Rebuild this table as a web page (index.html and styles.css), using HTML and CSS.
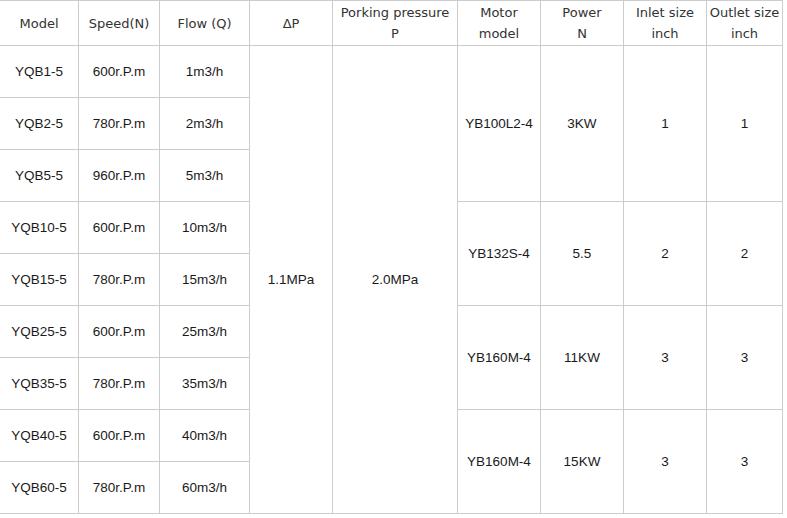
FILE: index.html
```html
<!DOCTYPE html>
<html>
<head>
<meta charset="utf-8">
<link rel="stylesheet" href="styles.css">
</head>
<body>
<table class="spec">
  <colgroup>
    <col class="c1"><col class="c2"><col class="c3"><col class="c4"><col class="c5"><col class="c6"><col class="c7"><col class="c8"><col class="c9">
  </colgroup>
  <thead>
    <tr class="head">
      <th>Model</th>
      <th>Speed(N)</th>
      <th>Flow (Q)</th>
      <th>ΔP</th>
      <th>Porking pressure<br>P</th>
      <th>Motor<br>model</th>
      <th>Power<br>N</th>
      <th>Inlet size<br>inch</th>
      <th>Outlet size<br>inch</th>
    </tr>
  </thead>
  <tbody>
    <tr>
      <td>YQB1-5</td><td>600r.P.m</td><td>1m3/h</td>
      <td rowspan="9">1.1MPa</td>
      <td rowspan="9">2.0MPa</td>
      <td rowspan="3">YB100L2-4</td>
      <td rowspan="3">3KW</td>
      <td rowspan="3">1</td>
      <td rowspan="3">1</td>
    </tr>
    <tr><td>YQB2-5</td><td>780r.P.m</td><td>2m3/h</td></tr>
    <tr><td>YQB5-5</td><td>960r.P.m</td><td>5m3/h</td></tr>
    <tr>
      <td>YQB10-5</td><td>600r.P.m</td><td>10m3/h</td>
      <td rowspan="2">YB132S-4</td>
      <td rowspan="2">5.5</td>
      <td rowspan="2">2</td>
      <td rowspan="2">2</td>
    </tr>
    <tr><td>YQB15-5</td><td>780r.P.m</td><td>15m3/h</td></tr>
    <tr>
      <td>YQB25-5</td><td>600r.P.m</td><td>25m3/h</td>
      <td rowspan="2">YB160M-4</td>
      <td rowspan="2">11KW</td>
      <td rowspan="2">3</td>
      <td rowspan="2">3</td>
    </tr>
    <tr><td>YQB35-5</td><td>780r.P.m</td><td>35m3/h</td></tr>
    <tr>
      <td>YQB40-5</td><td>600r.P.m</td><td>40m3/h</td>
      <td rowspan="2">YB160M-4</td>
      <td rowspan="2">15KW</td>
      <td rowspan="2">3</td>
      <td rowspan="2">3</td>
    </tr>
    <tr><td>YQB60-5</td><td>780r.P.m</td><td>60m3/h</td></tr>
  </tbody>
</table>
</body>
</html>
```
FILE: styles.css
```css
html, body {
  margin: 0;
  padding: 0;
  background: #fff;
}

.spec {
  border-collapse: collapse;
  table-layout: fixed;
  width: 783px;
  margin-left: -1px;
}

.c1 { width: 79px; }
.c2 { width: 81px; }
.c3 { width: 90px; }
.c4 { width: 83px; }
.c5 { width: 125px; }
.c6 { width: 83px; }
.c7 { width: 83px; }
.c8 { width: 83px; }
.c9 { width: 76px; }

.spec th,
.spec td {
  border: 1px solid #cccccc;
  padding: 0;
  text-align: center;
  vertical-align: middle;
}

.spec th {
  font-family: "DejaVu Sans", sans-serif;
  font-size: 13px;
  font-weight: normal;
  line-height: 21px;
  color: #333333;
  height: 44px;
}

.spec td {
  font-family: "Liberation Sans", Arial, sans-serif;
  font-size: 13.5px;
  line-height: 16px;
  color: #1a1a1a;
}

.spec tbody tr {
  height: 52px;
}
```
